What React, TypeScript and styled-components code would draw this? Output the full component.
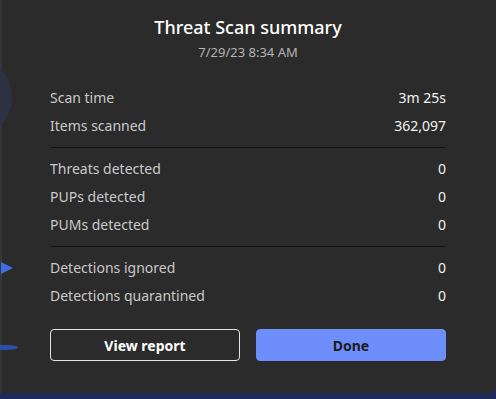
import styled, { createGlobalStyle } from "styled-components";

const GlobalStyle = createGlobalStyle`
	html, body {
		margin: 0;
		padding: 0;
		background: #2b2b2b;
	}
	* {
		box-sizing: border-box;
	}
`;

const Page = styled.div`
	position: relative;
	width: 496px;
	height: 399px;
	overflow: hidden;
	background: #1e2a5a;
	display: flex;
	flex-direction: column;
	font-family: "Noto Sans", "Open Sans", sans-serif;
`;

const Dialog = styled.div`
	height: 393px;
	background: #2b2b2b;
	border-left: 2px solid #363636;
	border-bottom-right-radius: 6px;
	padding: 15px 50px 0 48px;
	display: flex;
	flex-direction: column;
`;

const Title = styled.h1`
	margin: 0;
	text-align: center;
	font-size: 18px;
	line-height: 24px;
	font-weight: 500;
	color: #ffffff;
`;

const Stamp = styled.div`
	margin-top: 4px;
	text-align: center;
	font-size: 13px;
	line-height: 18px;
	color: #b4b4b4;
`;

const List = styled.div`
	margin-top: 22px;
	display: flex;
	flex-direction: column;
`;

const Row = styled.div`
	display: flex;
	justify-content: space-between;
	align-items: center;
	height: 28px;
	font-size: 14px;
`;

const Label = styled.span`
	color: #c9c9c9;
`;

const Value = styled.span`
	color: #f2f2f2;
`;

const Divider = styled.hr`
	margin: 8px 0 6px;
	border: none;
	height: 1px;
	background: #141414;
`;

const Buttons = styled.div`
	margin-top: 20px;
	display: grid;
	grid-template-columns: 1fr 1fr;
	gap: 16px;
`;

const Button = styled.button<{ $primary?: boolean }>`
	height: 32px;
	border-radius: 4px;
	font-family: inherit;
	font-size: 14px;
	font-weight: 700;
	cursor: pointer;
	border: 1px solid ${(p) => (p.$primary ? "#6e8ffb" : "#e6e6e6")};
	background: ${(p) => (p.$primary ? "#6e8ffb" : "transparent")};
	color: ${(p) => (p.$primary ? "#1b1b1b" : "#ffffff")};
`;

// bits of the window underneath that peek out at the left edge
const Glow = styled.div`
	position: absolute;
	left: -72px;
	top: 55px;
	width: 84px;
	height: 84px;
	border-radius: 50%;
	background: #2d3242;
`;

const Pointer = styled.div`
	position: absolute;
	left: 1px;
	top: 262px;
	width: 0;
	height: 0;
	border-top: 6px solid transparent;
	border-bottom: 6px solid transparent;
	border-left: 12px solid #3f6ee3;
`;

const Streak = styled.div`
	position: absolute;
	left: -4px;
	top: 345px;
	width: 22px;
	height: 5px;
	border-radius: 0 50% 50% 0;
	background: #2e4ea8;
`;

type Item = { label: string; value: string };

const groups: Item[][] = [
	[
		{ label: "Scan time", value: "3m 25s" },
		{ label: "Items scanned", value: "362,097" },
	],
	[
		{ label: "Threats detected", value: "0" },
		{ label: "PUPs detected", value: "0" },
		{ label: "PUMs detected", value: "0" },
	],
	[
		{ label: "Detections ignored", value: "0" },
		{ label: "Detections quarantined", value: "0" },
	],
];

export default function App() {
	return (
		<>
			<GlobalStyle />
			<Page>
				<Dialog>
					<Title>Threat Scan summary</Title>
					<Stamp>7/29/23 8:34 AM</Stamp>
					<List>
						{groups.map((group, i) => (
							<div key={i}>
								{i > 0 && <Divider />}
								{group.map((item) => (
									<Row key={item.label}>
										<Label>{item.label}</Label>
										<Value>{item.value}</Value>
									</Row>
								))}
							</div>
						))}
					</List>
					<Buttons>
						<Button>View report</Button>
						<Button $primary>Done</Button>
					</Buttons>
				</Dialog>
				<Glow />
				<Pointer />
				<Streak />
			</Page>
		</>
	);
}
